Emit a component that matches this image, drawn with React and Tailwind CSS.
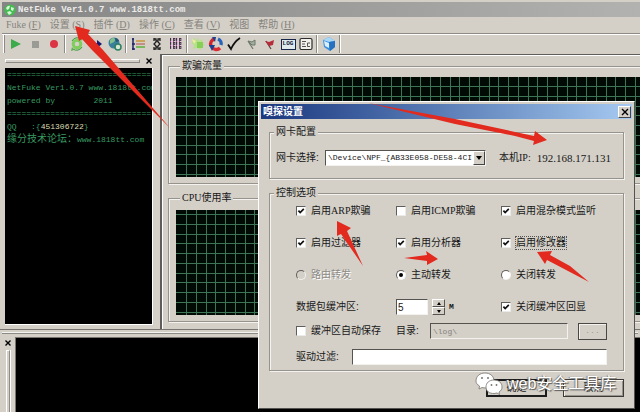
import React from "react";

const mono = "font-['Liberation_Mono','Noto_Sans_CJK_SC',monospace] text-[8px]";

function Latin({ children }) {
  return <span className="font-['Liberation_Serif',serif] text-[10px]">{children}</span>;
}

function Group({ title, className = "", children }) {
  return (
    <fieldset
      className={`min-w-0 border border-[#96938c] shadow-[1px_1px_0_#f4f2ee,inset_1px_1px_0_#f4f2ee] ${className}`}
    >
      <legend className="ml-1 h-3 bg-[#d4d0c8] px-[2px] leading-3">{title}</legend>
      {children}
    </fieldset>
  );
}

const steps = (n, first) => Array.from({ length: n }, (_, i) => Math.round(first + i * 9.76));

function Chart({ className, firstY, label }) {
  return (
    <div className={`overflow-hidden bg-[#020a06] ${className}`}>
      <svg className="h-full w-full" role="img" aria-label={label} shapeRendering="crispEdges">
        {steps(200, 10).map((x) => (
          <rect key={x} x={x} y="0" width="1" height="100%" fill="#3d7557" />
        ))}
        {steps(11, firstY).map((y) => (
          <rect key={y} x="0" y={y} width="100%" height="1" fill="#3d7557" />
        ))}
      </svg>
    </div>
  );
}

function Tick({ children, checked, className = "", focus }) {
  return (
    <label className={`flex h-4 items-center gap-1 whitespace-nowrap ${className}`}>
      <span className="grid">
        <input
          type="checkbox"
          defaultChecked={checked}
          className="peer h-[10px] w-[10px] appearance-none border border-t-[#605e5a] border-r-[#eceae6] border-b-[#eceae6] border-l-[#605e5a] bg-white [grid-area:1/1]"
        />
        <svg viewBox="0 0 10 10" className="pointer-events-none hidden h-[10px] w-[10px] [grid-area:1/1] peer-checked:block">
          <path d="M2.4 4.6 4.2 6.6 7.8 2.8" fill="none" stroke="#111" strokeWidth="1.7" />
        </svg>
      </span>
      <span className={focus ? "border border-dotted border-[#555] leading-[12px]" : "px-px leading-[14px]"}>{children}</span>
    </label>
  );
}

function Radio({ children, checked, disabled }) {
  return (
    <label
      className={`flex h-4 items-center gap-1 whitespace-nowrap ${disabled ? "text-[#8e8b85] [text-shadow:1px_1px_0_#fff]" : ""}`}
    >
      <span className="grid">
        <input
          type="radio"
          name="forward"
          defaultChecked={checked}
          disabled={disabled}
          className="peer h-[10px] w-[10px] appearance-none rounded-full border border-t-[#605e5a] border-r-[#f4f2ee] border-b-[#f4f2ee] border-l-[#605e5a] bg-white [grid-area:1/1] disabled:bg-[#d4d0c8]"
        />
        <span className="pointer-events-none m-[3px] hidden h-1 w-1 rounded-full bg-black [grid-area:1/1] peer-checked:block" />
      </span>
      <span className="px-px">{children}</span>
    </label>
  );
}

const menu = [
  ["", "Fuke (", "F"],
  ["设置", " (", "S"],
  ["插件", " (", "D"],
  ["操作", " (", "C"],
  ["查看", " (", "V"],
  ["视图", "", ""],
  ["帮助", " (", "H"],
];

const icons = {
  play: <path d="M3 3 13 8 3 13Z" fill="#3cab4c" />,
  stop: <rect x="5" y="5" width="7" height="7" fill="#9b9b96" />,
  record: <circle cx="8" cy="8" r="4" fill="#dc3545" />,
  gear: (
    <g fill="none">
      <circle cx="8" cy="8" r="3.8" stroke="#7fce5c" strokeWidth="3" />
      <path d="M3 5a6 6 0 0 1 9-2M13 11a6 6 0 0 1-9 2" stroke="#3b9c3c" strokeWidth="1" />
      <path d="M11 2l3-1-1 4M5 14l-3 1 1-4" fill="#55b148" />
    </g>
  ),
  jump: <path d="M3 7h6V4l5 4-5 4V9H3Z" fill="#171870" />,
  globe: (
    <g>
      <circle cx="7" cy="7" r="5.5" fill="#3a7f9c" />
      <path d="M3 4c3-3 5-2 5 0S5 7 3 8Z" fill="#83c08b" />
      <path d="M8 2q3 0 4 3L9 6Z" fill="#245577" />
      <circle cx="11" cy="11" r="3" fill="#d8e8cf" stroke="#2d7f65" strokeWidth="1.5" />
    </g>
  ),
  list: (
    <g fill="none">
      <path d="M3 2v12M2 3h2M2 8h3M2 13h3" stroke="#20236a" strokeWidth="1.5" />
      <path d="M6 5h9" stroke="#c99537" strokeWidth="1.5" />
      <path d="M6 8h9" stroke="#b84848" />
      <path d="M6 11h9" stroke="#5bb13b" strokeWidth="1.5" />
    </g>
  ),
  ladder: (
    <g fill="none" stroke="#1f1f1f" strokeWidth="1.3">
      <path d="M5 3h2v3L5 8l2 2v3H5M11 3H9v3l2 2-2 2v3h2M7 5h2M7 11h2" />
      <path d="M5 2v3M11 2v3M5 11v3M11 11v3" />
    </g>
  ),
  bits: (
    <g fill="none">
      {[3, 7, 11].map((y) =>
        [3, 6, 9, 12].map((x) => (
          <rect key={`${x}-${y}`} x={x - 0.5} y={y - 0.5} width={(x + y) % 2 ? 1.4 : 0.2} height="2" stroke="#4b2a50" strokeWidth=".9" />
        )),
      )}
      <path d="M2 5.500h12M2 9.500h12" stroke="#b04ab0" strokeDasharray="1 2" />
    </g>
  ),
  spark: (
    <g>
      <path d="M8 1l1 4 4-2-1 4 3 2-4 1v4l-4-2-4 1 1-4-3-2 3-2-1-3 4 2Z" fill="#b7e08a" />
      <path d="M7 6h6v6H7Z" fill="#86d058" />
      <path d="M2 3l4 2-2 3Z" fill="#f0ee9c" />
    </g>
  ),
  swap: (
    <g fill="none" strokeWidth="3.4">
      <path d="M13 9a5 5 0 0 0-3-6" stroke="#2763b8" />
      <path d="M3 10a5 5 0 0 1 4-7" stroke="#cf2630" />
      <path d="M4 11a5 5 0 0 0 8 1" stroke="#d92d32" />
      <path d="M1 9l6 0-3 6Z" fill="#1c3f91" />
      <path d="M8 1l-4 0 3 5Z" fill="#1c3f91" />
    </g>
  ),
  check: <path d="M2 8.5 5 13 Q8 6 14 2" fill="none" stroke="#111" strokeWidth="1.8" />,
  flag: (
    <g fill="none" stroke="#6b786a">
      <path d="M4 5l5 8" strokeWidth="1.2" />
      <path d="M4 5l4 1 3-2v5l-3 0Z" fill="#a5b0a0" />
    </g>
  ),
  redflag: (
    <g>
      <path d="M4 5l5 8" stroke="#68383b" strokeWidth="1.2" />
      <path d="M3 5l4 1 5-2-1 5-4 1Z" fill="#b52d3a" />
    </g>
  ),
  script: (
    <g fill="none" stroke="#2c2c2c">
      <rect x="2" y="2.5" width="12" height="11" rx="1.5" fill="#f2f0ea" strokeWidth="1.2" />
      <path d="M4 5.500h4M4 8h3M4 10.500h4M12 7H9.500v3.500H12" stroke="#555" />
    </g>
  ),
  crystal: (
    <g>
      <path d="M2 4 8 1l6 4v6l-5 4-6-4Z" fill="#3d8fdc" />
      <path d="M2 4l6-3 6 4-6 1Z" fill="#a9d8f6" />
      <path d="M3 5l5 2v5l-4-2Z" fill="#d9effb" />
      <path d="M8 6l6-1v6l-5 4Z" fill="#2670c0" />
    </g>
  ),
};

function Tool({ name, label, width }) {
  return (
    <button type="button" aria-label={label} className={`flex h-5 items-center justify-center ${width}`}>
      {name === "log" ? (
        <span className="flex h-[11px] w-[15px] items-center justify-center border border-[#16254a] bg-[#dfe9ec] font-['Liberation_Mono',monospace] text-[6px] leading-none font-bold text-[#14203f]">
          LOG
        </span>
      ) : (
        <svg viewBox="0 0 16 16" className="h-4 w-4">
          {icons[name]}
        </svg>
      )}
    </button>
  );
}

function Sep() {
  return <span className="mx-px h-[18px] w-[2px] border-r border-l border-r-white border-l-[#8c8a84]" />;
}

const toolGroups = [
  [["play", "Start"], ["stop", "Stop"], ["record", "Record"]],
  [["gear", "Configure"], ["jump", "Jump"], ["globe", "Network"]],
  [["list", "List"], ["ladder", "Filter"], ["bits", "Data"]],
  [["spark", "New"], ["swap", "Swap"], ["check", "Apply"], ["flag", "Flag"], ["redflag", "Red flag"], ["log", "Log"], ["script", "Script"]],
  [["crystal", "About"]],
];

function SniffDialog() {
  return (
    <section
      role="dialog"
      aria-label="嗅探设置"
      className="absolute top-[101px] left-[258px] w-[377px] border border-t-white border-r-[#55534f] border-b-[#55534f] border-l-white bg-[#d4d0c8] p-[2px]"
    >
      <header className="flex h-[15px] items-center justify-between bg-gradient-to-r from-[#1c3880] to-[#a6caf0] pr-px pl-[2px]">
        <h2 className="text-[10px] font-bold text-white">嗅探设置</h2>
        <button
          type="button"
          aria-label="Close"
          className="flex h-3 w-[13px] items-center justify-center border border-t-white border-r-[#444] border-b-[#444] border-l-white bg-[#d4d0c8]"
        >
          <svg viewBox="0 0 8 8" className="h-2 w-2">
            <path d="M1 1l6 6M7 1 1 7" stroke="#000" strokeWidth="1.4" />
          </svg>
        </button>
      </header>
      <div className="px-2 pt-[7px] pb-[9px]">
        <Group title="网卡配置" className="pb-3">
          <div className="flex items-center pt-3 pl-[6px]">
            <label htmlFor="nic" className="w-[49px] whitespace-nowrap">
              网卡选择:
            </label>
            <span className="grid h-4 w-[161px]">
              <select
                id="nic"
                className={`${mono} h-4 w-full appearance-none overflow-hidden border border-t-[#55534f] border-r-[#f4f2ee] border-b-[#f4f2ee] border-l-[#55534f] bg-white pr-3 pl-[2px] [grid-area:1/1]`}
              >
                <option>{"\\Device\\NPF_{AB33E058-DE58-4CI"}</option>
              </select>
              <span className="pointer-events-none m-px flex w-3 items-center justify-center justify-self-end border border-t-white border-r-[#444] border-b-[#444] border-l-white bg-[#d4d0c8] [grid-area:1/1]">
                <svg viewBox="0 0 6 4" className="h-1 w-[6px]">
                  <path d="M0 0h6L3 4Z" />
                </svg>
              </span>
            </span>
            <span className="ml-[13px] flex gap-[6px] whitespace-nowrap">
              <span>
                本机<Latin>IP:</Latin>
              </span>
              <span className="font-['Liberation_Serif',serif] text-[11px]">192.168.171.131</span>
            </span>
          </div>
        </Group>
        <Group title="控制选项" className="mt-2 pb-[5px]">
          <div className="pt-1 pr-4 pl-[26px]">
            <div className="grid grid-cols-[100px_105px_1fr] gap-y-4">
              <Tick checked>
                启用<Latin>ARP</Latin>欺骗
              </Tick>
              <Tick>
                启用<Latin>ICMP</Latin>欺骗
              </Tick>
              <Tick checked>启用混杂模式监听</Tick>
              <Tick checked>启用过滤器</Tick>
              <Tick checked>启用分析器</Tick>
              <Tick checked focus>
                启用修改器
              </Tick>
              <Radio disabled>路由转发</Radio>
              <Radio checked>主动转发</Radio>
              <Radio>关闭转发</Radio>
              <label htmlFor="buffer" className="leading-4 whitespace-nowrap">
                数据包缓冲区:
              </label>
              <span className="flex h-4 items-center">
                <input
                  id="buffer"
                  type="text"
                  defaultValue="5"
                  className="h-4 w-8 border border-t-[#55534f] border-r-[#f4f2ee] border-b-[#f4f2ee] border-l-[#55534f] bg-white pl-px font-['Liberation_Sans',sans-serif] text-[10px] leading-none"
                />
                <span className="ml-1 flex w-[13px] flex-col">
                  {["M0 3 2 0l2 3Z", "M0 0h4L2 3Z"].map((d, i) => (
                    <button
                      key={d}
                      type="button"
                      aria-label={i ? "Decrease" : "Increase"}
                      className="flex h-2 items-center justify-center border border-t-white border-r-[#55534f] border-b-[#55534f] border-l-white"
                    >
                      <svg viewBox="0 0 4 3" className="h-[3px] w-1">
                        <path d={d} />
                      </svg>
                    </button>
                  ))}
                </span>
                <span className={`${mono} ml-1 font-bold`}>M</span>
              </span>
              <Tick checked>关闭缓冲区回显</Tick>
            </div>
            <div className="mt-2 flex h-4 items-center">
              <Tick className="w-[100px]">缓冲区自动保存</Tick>
              <label htmlFor="dir" className="w-[34px] whitespace-nowrap">
                目录:
              </label>
              <input
                id="dir"
                type="text"
                disabled
                defaultValue={"\\log\\"}
                className={`${mono} h-4 min-w-0 flex-1 border border-t-[#55534f] border-r-[#f4f2ee] border-b-[#f4f2ee] border-l-[#55534f] bg-[#d4d0c8] pl-[2px] text-[#85827c]`}
              />
              <button
                type="button"
                disabled
                className={`${mono} ml-[10px] h-[17px] w-[29px] border border-[#4a4844] text-[#9b9892] shadow-[inset_1px_1px_0_#f4f2ee]`}
              >
                ...
              </button>
            </div>
            <div className="mt-[10px] flex h-4 items-center">
              <label htmlFor="filter" className="w-14 whitespace-nowrap">
                驱动过滤:
              </label>
              <input
                id="filter"
                type="text"
                className="h-4 min-w-0 flex-1 border border-t-[#55534f] border-r-[#f4f2ee] border-b-[#f4f2ee] border-l-[#55534f] bg-white"
              />
            </div>
          </div>
        </Group>
        <footer className="mt-2 flex justify-end gap-4">
          <button type="button" className="h-[18px] w-[61px] border-2 border-[#1c1c1c] leading-none">
            确定
          </button>
          <button
            type="button"
            className="h-[18px] w-[61px] border border-[#3c3b38] leading-none shadow-[inset_1px_1px_0_#f4f2ee,inset_-1px_-1px_0_#96938c]"
          >
            取消
          </button>
        </footer>
      </div>
    </section>
  );
}

export default function App() {
  return (
    <div className="relative flex min-h-screen flex-col overflow-hidden bg-[#d4d0c8] font-['Liberation_Sans','Noto_Sans_CJK_SC',sans-serif] text-[10px] leading-[14px] text-[#181818]">
      <header className="mt-[2px] ml-[2px] flex h-[15px] items-center gap-[2px] bg-gradient-to-r from-[#858585] to-[#b2b2b0] pl-[2px]">
        <svg viewBox="0 0 12 12" className="h-3 w-3">
          <circle cx="6" cy="6" r="5.6" fill="#43bd50" />
          <path d="M2 4q2-3 4-2L5 5 3 6ZM7 3l3 1-1 3-2-1ZM3 8l3-1 2 2-3 2Z" fill="#d8f5d8" />
        </svg>
        <h1 className="font-['Liberation_Mono',monospace] text-[9px] font-bold whitespace-pre text-[#ecebe8]">
          NetFuke Ver1.0.7 www.1818tt.com
        </h1>
      </header>
      <nav className="flex h-4 items-center gap-[9px] pl-[6px] text-[#86837d]">
        {menu.map(([han, open, key]) => (
          <button key={han + open} type="button" className="min-w-[20px] whitespace-pre">
            {han}
            {open && (
              <Latin>
                {open}
                <u>{key}</u>)
              </Latin>
            )}
          </button>
        ))}
      </nav>
      <div className="ml-[2px] flex h-[21px] items-center border-t border-[#8c8a84] pl-px shadow-[inset_0_1px_0_#fff]">
        <span className="mr-px h-[18px] w-[2px] border-r border-l border-r-[#8c8a84] border-l-white" />
        {toolGroups.map((group, i) => (
          <div key={i} className="flex items-center">
            {group.map(([name, label]) => (
              <Tool key={name} name={name} label={label} width={group.length > 3 ? "w-[18px]" : "w-[19px]"} />
            ))}
            <Sep />
          </div>
        ))}
      </div>

      <div className="flex border-b border-[#77756f]">
        <aside className="flex w-40 flex-col pr-[7px] pb-1 pl-[5px]">
          <div className="flex h-[14px] items-center gap-1">
            <span className="h-1 flex-1 border border-t-white border-r-[#8c8a84] border-b-[#8c8a84] border-l-white" />
            <button type="button" aria-label="Close" className="flex w-[9px] justify-center">
              <svg viewBox="0 0 6 6" className="h-[6px] w-[6px]">
                <path d="M.5.5l5 5M5.500.5l-5 5" stroke="#000" strokeWidth="1.4" />
              </svg>
            </button>
          </div>
          <div
            className={`${mono} flex-1 overflow-hidden border-r border-b border-white bg-black pl-[2px] leading-[13px] whitespace-pre text-[#379a61]`}
          >
            <p>==============================</p>
            <p>NetFuke Ver1.0.7 www.1818tt.com</p>
            <p>powered by{"        "}2011</p>
            <p>==============================</p>
            <p>
              QQ{"   "}:{"{"}
              <span className="text-[#dcdcb4]">451306722</span>
              {"}"}
            </p>
            <p>
              <span className="text-[10px]">缘分技术论坛：</span>www.1818tt.com
            </p>
          </div>
        </aside>
        <main className="min-w-0 flex-1 border-t border-l-2 border-[#5f5d59] pb-[7px] pl-[6px] shadow-[inset_1px_1px_0_#fff]">
          <Group title="欺骗流量" className="mt-[5px] border-r-0 pb-[6px] pl-[7px]">
            <Chart className="mt-[5px] h-[100px]" firstY={9} label="欺骗流量" />
          </Group>
          <Group
            title={
              <>
                <Latin>CPU</Latin>使用率
              </>
            }
            className="mt-[8px] border-r-0 pb-[6px] pl-[7px]"
          >
            <Chart className="mt-[6px] h-[105px]" firstY={4} label="CPU使用率" />
          </Group>
        </main>
      </div>

      <div className="mx-[2px] mt-[2px] h-[2px] border-t border-b border-t-[#f4f2ee] border-b-[#8c8a84]" />
      <div className="mt-[3px] flex flex-1">
        <div className="flex w-[15px] flex-col items-center gap-1 pt-[3px] pl-px">
          <button type="button" aria-label="Close">
            <svg viewBox="0 0 6 6" className="h-[6px] w-[6px]">
              <path d="M.5.5l5 5M5.500.5l-5 5" stroke="#000" strokeWidth="1.4" />
            </svg>
          </button>
          <span className="w-1 flex-1 border border-b-0 border-t-white border-r-[#8c8a84] border-l-white shadow-[1px_0_0_#fff]" />
        </div>
        <div className="flex-1 border-t border-l border-[#77756f] bg-black" />
      </div>

      <SniffDialog />

      <svg viewBox="0 0 640 412" className="pointer-events-none absolute top-0 left-0 h-[412px] w-[640px]" fill="#e32a1e">
        <path d="M75 26 90 30 88 34 103 50 170 128 92 50 82 39 79 41Z" />
        <path d="M368 103 455 119 534 136 535 131 547 140 533 145 534 141 515 136 455 124Z" />
        <path d="M337 221 351 228 347 231 363 266 341 234 337 236Z" />
        <path d="M404 258 427 255 426 251 438 259 427 265 427 261Z" />
        <path d="M537 252 552 251 550 255 570 266 589 282 547 260 545 264Z" />
      </svg>

      <div className="pointer-events-none absolute top-[372px] left-[475px] flex items-center gap-1">
        <svg viewBox="0 0 28 24" className="h-6 w-7" fill="#fff" stroke="#77746e" strokeWidth=".8">
          <path d="M10 1c5 0 9 3 9 8s-4 7-9 7l-3-.5L4 17l.5-3C2 12.500 1 11 1 9c0-5 4-8 9-8Z" />
          <path d="M19 8c5 0 8 3 8 7 0 2-1 4-3 5l.5 2.500L22 21l-3 .5c-5 0-8-2.500-8-6.500s3-7 8-7Z" />
          <g fill="#77746e" stroke="none">
            <circle cx="7" cy="6" r="1" />
            <circle cx="13" cy="6" r="1" />
            <circle cx="16.500" cy="13" r=".9" />
            <circle cx="21.500" cy="13" r=".9" />
          </g>
        </svg>
        <span className="text-[16px] leading-6 whitespace-nowrap text-white [text-shadow:1px_1px_1px_#55534f,-1px_0_1px_#77746e]">
          web安全工具库
        </span>
      </div>
    </div>
  );
}
